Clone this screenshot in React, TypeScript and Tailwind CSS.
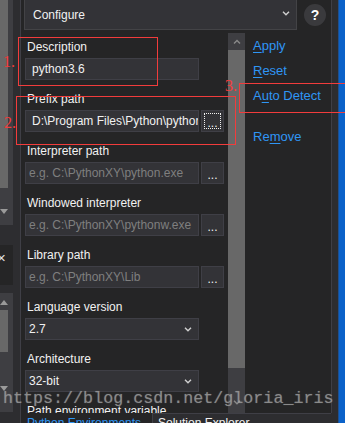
type FieldProps = {
  label: string;
  value?: string;
  placeholder?: string;
  focused?: boolean;
  noButton?: boolean;
};

function Chevron({ up }: { up?: boolean }) {
  return (
    <svg width="8" height="5" viewBox="0 0 8 5" className="block">
      <path
        d={up ? "M1 4.5 4 1.5 7 4.5" : "M1 0.8 4 3.8 7 0.8"}
        fill="none"
        stroke="currentColor"
        strokeWidth="1.4"
      />
    </svg>
  );
}

function Triangle({ up }: { up?: boolean }) {
  return (
    <svg width="8" height="5" viewBox="0 0 8 5" className="block">
      <path d={up ? "M0 5 4 0 8 5Z" : "M0 0 8 0 4 5Z"} fill="#9a9a9a" />
    </svg>
  );
}

function Label({ children }: { children: string }) {
  return (
    <div className="h-[16px] whitespace-nowrap pl-[2px] leading-[16px] text-[#f1f1f1]">
      {children}
    </div>
  );
}

function PathField({ label, value, placeholder, focused, noButton }: FieldProps) {
  return (
    <div className="mb-[11px]">
      <Label>{label}</Label>
      <div className="mt-[3px] flex gap-[2px]">
        <div className="flex h-[22px] w-[174px] items-center overflow-hidden whitespace-nowrap border border-[#3f3f46] bg-[#333337]">
          {value ? (
            <span className="pl-[6px] text-[#f1f1f1]">{value}</span>
          ) : (
            <span className="pl-[3px] text-[#7f7f7f]">{placeholder}</span>
          )}
        </div>
        {!noButton && (
          <div className="relative flex h-[22px] w-[23px] items-center justify-center border border-[#3f3f46] bg-[#333337] text-[#f1f1f1]">
            {focused && (
              <div className="absolute inset-[2px] border border-dotted border-[#f1f1f1]" />
            )}
            <span className="pt-[3px] leading-none">...</span>
          </div>
        )}
      </div>
    </div>
  );
}

function SelectField({ label, value }: { label: string; value: string }) {
  return (
    <div className="mb-[11px]">
      <Label>{label}</Label>
      <div className="mt-[3px] flex h-[22px] w-[174px] items-center justify-between border border-[#3f3f46] bg-[#333337] pl-[3px] pr-[6px] text-[#f1f1f1]">
        <span>{value}</span>
        <span className="text-[#d0d0d0]">
          <Chevron />
        </span>
      </div>
    </div>
  );
}

function Link({ pre, key1, post, top }: { pre: string; key1: string; post: string; top: string }) {
  return (
    <div className={`${top} h-[16px] whitespace-nowrap text-[13px] leading-[16px] text-[#2f96f5]`}>
      {pre}
      <span className="underline underline-offset-2">{key1}</span>
      {post}
    </div>
  );
}

export default function App() {
  return (
    <div className="relative flex h-[423px] w-[345px] overflow-hidden bg-[#2d2d30] font-['Liberation_Sans',Arial,sans-serif] text-[12px]">
      {/* left docked strip */}
      <div className="flex w-[20px] shrink-0 flex-col">
        <div className="flex h-[225px] w-[13px] flex-col bg-[#3e3e42]">
          <div className="h-[188px] w-[8px] bg-[#686868]" />
          <div className="pt-[21px]">
            <Triangle />
          </div>
        </div>
        <div className="h-[20px]" />
        <div className="relative h-[40px] w-[13px] overflow-hidden bg-[#252526]">
          <span className="absolute -left-[3px] top-[5px] text-[15px] leading-[16px] text-[#e0e0e0]">×</span>
        </div>
        <div className="h-[8px]" />
        <div className="flex h-[119px] w-[13px] flex-col bg-[#3e3e42]">
          <div className="h-[17px] pt-[7px]">
            <Triangle up />
          </div>
          <div className="h-[42px] w-[8px] bg-[#686868]" />
          <div className="pt-[34px]">
            <Triangle />
          </div>
        </div>
      </div>
      <div className="w-px shrink-0 bg-[#3f3f46]" />

      {/* main panel */}
      <div className="flex w-[310px] shrink-0 flex-col bg-[#252526]">
        <div className="flex h-[33px] shrink-0">
          <div className="-mt-px ml-[3px] flex h-[31px] w-[273px] items-center justify-between border border-[#434346] bg-[#333337] pl-[8px] pr-[6px] text-[#f1f1f1]">
            <span className="pt-[1px]">Configure</span>
            <span className="-mt-[3px] text-[#d0d0d0]">
              <Chevron />
            </span>
          </div>
          <div className="ml-[7px] mt-[4px] flex h-[22px] w-[22px] items-center justify-center rounded-full bg-[#3a3a3d] text-[14px] font-bold text-white">
            ?
          </div>
        </div>

        <div className="flex h-[380px] shrink-0">
          <div className="w-[207px] overflow-hidden pl-[4px] pt-[6px]">
            <PathField label="Description" value="python3.6" noButton />
            <PathField label="Prefix path" value="D:\Program Files\Python\python3.6" focused />
            <PathField label="Interpreter path" placeholder="e.g. C:\PythonXY\python.exe" />
            <PathField label="Windowed interpreter" placeholder="e.g. C:\PythonXY\pythonw.exe" />
            <PathField label="Library path" placeholder="e.g. C:\PythonXY\Lib" />
            <SelectField label="Language version" value="2.7" />
            <SelectField label="Architecture" value="32-bit" />
            <Label>Path environment variable</Label>
          </div>

          <div className="flex w-[17px] flex-col bg-[#3e3e42]">
            <div className="flex h-[17px] items-center justify-center text-[#8a8a8a]">
              <Chevron up />
            </div>
            <div className="h-[318px] bg-[#686868]" />
            <div className="flex flex-1 items-start justify-center pt-[32px] text-[#8a8a8a]">
              <Chevron />
            </div>
          </div>

          <div className="flex-1 pl-[8px] pt-[5px]">
            <Link pre="" key1="A" post="pply" top="" />
            <Link pre="" key1="R" post="eset" top="mt-[9px]" />
            <Link pre="A" key1="u" post="to Detect" top="mt-[9px]" />
            <Link pre="Re" key1="m" post="ove" top="mt-[25px]" />
          </div>
        </div>

        <div className="flex flex-1">
          <div className="w-[131px] whitespace-nowrap pl-[6px] pt-[2px] leading-[16px] text-[#2f96f5]">
            Python Environments
          </div>
          <div className="flex-1 whitespace-nowrap border-l border-t border-[#3f3f46] bg-[#2d2d30] pl-[5px] pt-[1px] leading-[16px] text-[#f1f1f1]">
            Solution Explorer
          </div>
        </div>
      </div>

      <div className="h-[413px] w-px shrink-0 bg-[#3f3f46]" />
      <div className="w-[6px] shrink-0" />
      <div className="w-[7px] shrink-0 border-l border-[#1d4f8f] bg-[#0b62c9]" />

      {/* annotations */}
      <div className="absolute left-[18px] top-[37px] h-[49px] w-[140px] border border-[#f23c3c]" />
      <div className="absolute left-[3px] top-[52px] font-['Liberation_Serif',serif] text-[16px] leading-[20px] text-[#f23c3c]">1.</div>
      <div className="absolute left-[16px] top-[96px] h-[49px] w-[220px] border border-[#f23c3c]" />
      <div className="absolute left-[4px] top-[113px] font-['Liberation_Serif',serif] text-[16px] leading-[20px] text-[#f23c3c]">2.</div>
      <div className="absolute left-[239px] top-[83px] h-[30px] w-[110px] border border-[#f23c3c]" />
      <div className="absolute left-[225px] top-[76px] font-['Liberation_Serif',serif] text-[16px] leading-[20px] text-[#f23c3c]">3.</div>

      <div className="absolute left-[3px] top-[389px] whitespace-nowrap font-['Liberation_Mono','Courier_New',monospace] text-[16.7px] leading-[20px] text-[#9a9a9a]/75 [text-shadow:0_0_1px_rgba(255,255,255,0.3)]">
        https://blog.csdn.net/gloria_iris
      </div>
    </div>
  );
}
